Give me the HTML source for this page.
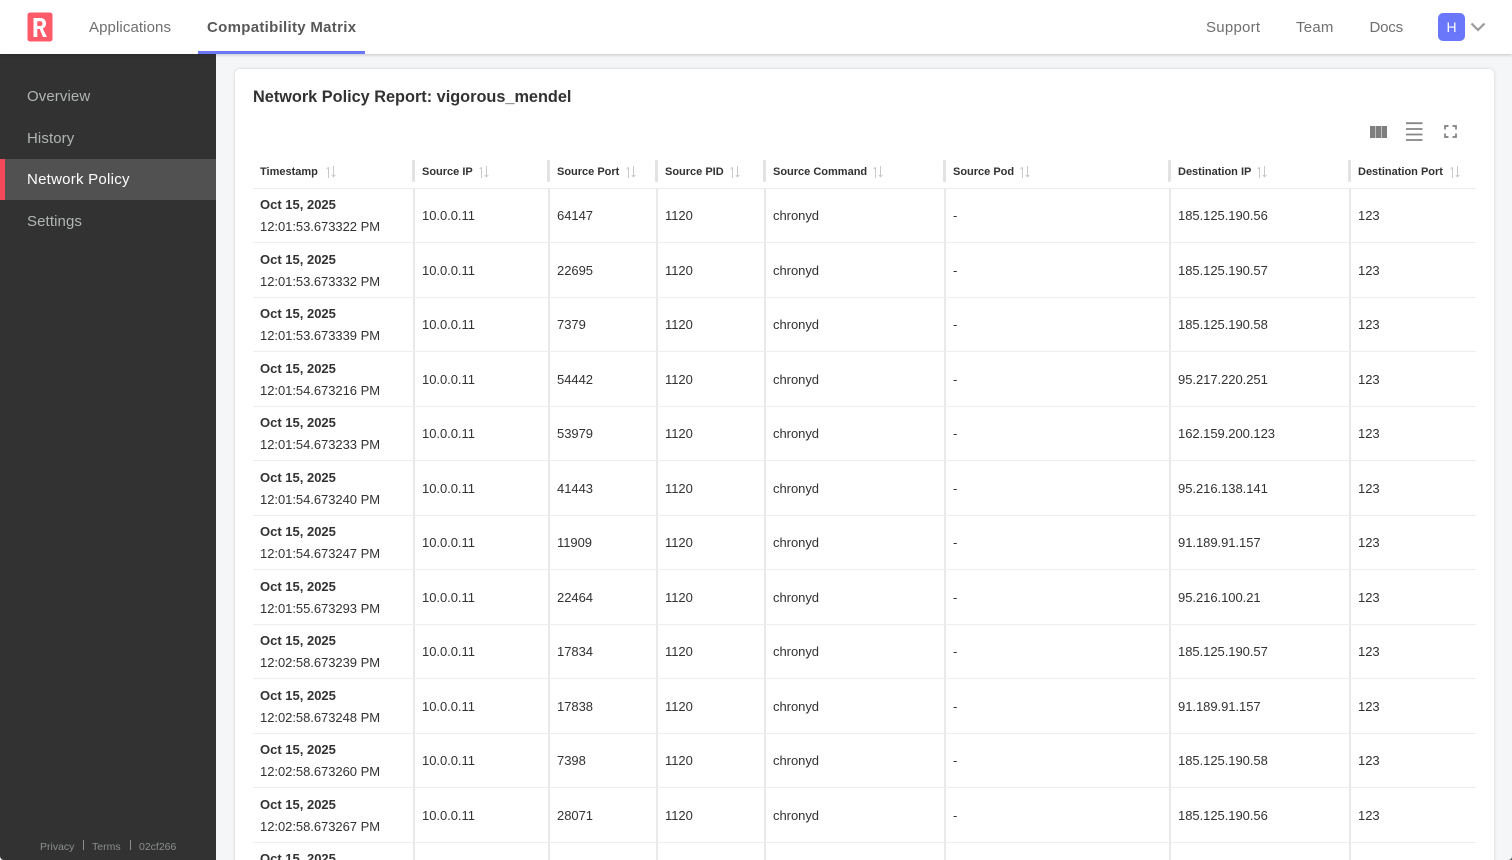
<!DOCTYPE html>
<html><head><meta charset="utf-8"><title>Network Policy</title>
<style>
*{box-sizing:border-box}
html,body{margin:0;padding:0;width:1512px;height:860px;overflow:hidden;background:#f5f6f8;font-family:"Liberation Sans",sans-serif;color:#323232}
#wrap{position:relative;width:1512px;height:860px;overflow:hidden;background:#f5f6f8}
.a{position:absolute;white-space:nowrap}
#top{position:absolute;left:0;top:0;width:1512px;height:54px;background:#fff;box-shadow:0 1px 3px rgba(0,0,0,.2);z-index:3}
.nav{font-size:15px;line-height:20px;color:#6f6f6f;top:18px;letter-spacing:.1px}
#side{position:absolute;left:0;top:54px;width:216px;height:806px;background:#323232;z-index:2;border-bottom-left-radius:4px}
.si{position:absolute;left:27px;font-size:15px;line-height:20px;color:#b0b5b5;white-space:nowrap;letter-spacing:.1px}
.ft{font-size:10.500px;line-height:14px;color:#8a8f8f;top:840px}
#card{position:absolute;left:235px;top:69px;width:1259px;height:800px;background:#fff;border-radius:5px;box-shadow:0 0 3px rgba(0,0,0,.16)}
#tbl{position:absolute;left:253px;top:160px;width:1223px}
.h,.r{display:flex;position:absolute;left:0;width:1223px}
.h{top:0;height:28.500px;border-bottom:1px solid #eeeeee;font-size:11px;font-weight:bold;line-height:24px;color:#323232}
.r{height:54.500px;border-bottom:1px solid #eeeeee;font-size:13px;color:#323232;letter-spacing:-.04px}
.c{position:relative;height:100%;white-space:nowrap}
.r .c{line-height:53px;border-left:2px solid #e9e9e9;padding-left:7px;padding-top:.6px}
.r .c:first-child{border-left:0;padding-left:7px;line-height:22px;padding-top:5.600px}
.h .c{padding-left:9px}
.h .c:first-child{padding-left:7px}
.h .c:not(:first-child)::before{content:"";position:absolute;left:-1px;top:0;width:3px;height:22px;background:#e3e3e3;border-radius:1px}
.c1{width:160px}.c2{width:135px}.c3{width:108px}.c4{width:108px}.c5{width:180px}.c6{width:225px}.c7{width:180px}.c8{width:127px}
b{font-weight:bold;font-size:13px;display:block;color:#323232;letter-spacing:0}
.s{display:inline-block;vertical-align:-3px;margin-left:5px}
.h .c1 .s{margin-left:7px}
.h .c3 .s,.h .c8 .s{margin-left:6px}
</style></head><body>
<div id="wrap">
<svg width="0" height="0" style="position:absolute"><defs><symbol id="sort" viewBox="0 0 12 12"><path d="M3.500 12V1.200M1.700 3 3.500 1.200M8.500 0V10.800M6.700 9 8.500 10.800 10.300 9" fill="none" stroke="#c9c9c9" stroke-width="1"/></symbol></defs></svg>

<div id="top">
<svg class="a" style="left:27px;top:12px" width="26" height="30" viewBox="0 0 26 30"><rect x="0.500" y="0.500" width="25" height="29" rx="2.500" fill="#fe5a6a"/><path d="M6.500 25V6h6.800c3.800 0 5.700 2.300 5.700 5.500 0 2.500-1.200 4.300-3.300 5L20 25h-4l-3.300-8H10.300v8zM10.300 14h2.800c1.600 0 2.400-1 2.400-2.500 0-1.400-.8-2.300-2.400-2.300h-2.800z" fill="#fff"/></svg>
<div class="a nav" style="left:89px">Applications</div>
<div class="a nav" style="left:207px;font-weight:bold;color:#585858;letter-spacing:.3px">Compatibility Matrix</div>
<div class="a" style="left:198px;top:51px;width:167px;height:3px;background:#6a77fb"></div>
<div class="a nav" style="left:1206px;letter-spacing:.25px">Support</div>
<div class="a nav" style="left:1296px;letter-spacing:.25px">Team</div>
<div class="a nav" style="left:1369.500px;letter-spacing:-.2px">Docs</div>
<div class="a" style="left:1438px;top:13px;width:27px;height:28px;border-radius:5px;background:#6a77fb;color:#fff;font-size:14px;line-height:28px;text-align:center">H</div>
<svg class="a" style="left:1470px;top:22px" width="16" height="10" viewBox="0 0 16 10"><path d="M1.500 1.500 8 8l6.500-6.500" fill="none" stroke="#9b9b9b" stroke-width="2.200"/></svg>
</div>

<div id="side">
<div class="si" style="top:33px">Overview</div>
<div class="si" style="top:75px">History</div>
<div style="position:absolute;left:0;top:104.500px;width:216px;height:41.500px;background:#515151;border-left:5px solid #f4495a"></div>
<div class="si" style="top:116px;color:#fff;letter-spacing:.25px">Network Policy</div>
<div class="si" style="top:158px">Settings</div>
</div>
<div class="a ft" style="left:40px;z-index:3">Privacy</div>
<div class="a" style="left:83px;top:840px;width:1px;height:10px;background:#8a8f8f;z-index:3"></div>
<div class="a ft" style="left:92px;z-index:3">Terms</div>
<div class="a" style="left:130px;top:840px;width:1px;height:10px;background:#8a8f8f;z-index:3"></div>
<div class="a ft" style="left:139px;z-index:3">02cf266</div>

<div id="card"></div>
<div class="a" style="left:253px;top:87px;font-size:16.300px;line-height:21px;font-weight:bold;color:#323232">Network Policy Report: vigorous_mendel</div>

<svg class="a" style="left:1370px;top:126px" width="17" height="12" viewBox="0 0 17 12"><path d="M0 0h5.300v12H0zM5.800 0h5.400v12H5.800zM11.700 0H17v12h-5.300z" fill="#7f7f7f"/></svg>
<svg class="a" style="left:1405px;top:122px" width="18" height="19" viewBox="0 0 18 19"><path d="M1 1.200h16.500M1 7h16.500M1 12.500h16.500M1 18h16.500" fill="none" stroke="#858585" stroke-width="1.800"/></svg>
<svg class="a" style="left:1444px;top:125px" width="13" height="13" viewBox="0 0 13 13"><path d="M1 4.500V1h3.500M8.500 1H12v3.500M12 8.500V12H8.500M4.500 12H1V8.500" fill="none" stroke="#7f7f7f" stroke-width="1.700"/></svg>

<div id="tbl">
<div class="h">
<div class="c c1">Timestamp<svg class="s" width="12" height="12"><use href="#sort"/></svg></div>
<div class="c c2">Source IP<svg class="s" width="12" height="12"><use href="#sort"/></svg></div>
<div class="c c3">Source Port<svg class="s" width="12" height="12"><use href="#sort"/></svg></div>
<div class="c c4">Source PID<svg class="s" width="12" height="12"><use href="#sort"/></svg></div>
<div class="c c5">Source Command<svg class="s" width="12" height="12"><use href="#sort"/></svg></div>
<div class="c c6">Source Pod<svg class="s" width="12" height="12"><use href="#sort"/></svg></div>
<div class="c c7">Destination IP<svg class="s" width="12" height="12"><use href="#sort"/></svg></div>
<div class="c c8">Destination Port<svg class="s" width="12" height="12"><use href="#sort"/></svg></div>
</div>
<div class="r" style="top:28.500px"><div class="c c1"><b>Oct 15, 2025</b>12:01:53.673322 PM</div><div class="c c2">10.0.0.11</div><div class="c c3">64147</div><div class="c c4">1120</div><div class="c c5">chronyd</div><div class="c c6">-</div><div class="c c7">185.125.190.56</div><div class="c c8">123</div></div>
<div class="r" style="top:83px"><div class="c c1"><b>Oct 15, 2025</b>12:01:53.673332 PM</div><div class="c c2">10.0.0.11</div><div class="c c3">22695</div><div class="c c4">1120</div><div class="c c5">chronyd</div><div class="c c6">-</div><div class="c c7">185.125.190.57</div><div class="c c8">123</div></div>
<div class="r" style="top:137.500px"><div class="c c1"><b>Oct 15, 2025</b>12:01:53.673339 PM</div><div class="c c2">10.0.0.11</div><div class="c c3">7379</div><div class="c c4">1120</div><div class="c c5">chronyd</div><div class="c c6">-</div><div class="c c7">185.125.190.58</div><div class="c c8">123</div></div>
<div class="r" style="top:192px"><div class="c c1"><b>Oct 15, 2025</b>12:01:54.673216 PM</div><div class="c c2">10.0.0.11</div><div class="c c3">54442</div><div class="c c4">1120</div><div class="c c5">chronyd</div><div class="c c6">-</div><div class="c c7">95.217.220.251</div><div class="c c8">123</div></div>
<div class="r" style="top:246.500px"><div class="c c1"><b>Oct 15, 2025</b>12:01:54.673233 PM</div><div class="c c2">10.0.0.11</div><div class="c c3">53979</div><div class="c c4">1120</div><div class="c c5">chronyd</div><div class="c c6">-</div><div class="c c7">162.159.200.123</div><div class="c c8">123</div></div>
<div class="r" style="top:301px"><div class="c c1"><b>Oct 15, 2025</b>12:01:54.673240 PM</div><div class="c c2">10.0.0.11</div><div class="c c3">41443</div><div class="c c4">1120</div><div class="c c5">chronyd</div><div class="c c6">-</div><div class="c c7">95.216.138.141</div><div class="c c8">123</div></div>
<div class="r" style="top:355.500px"><div class="c c1"><b>Oct 15, 2025</b>12:01:54.673247 PM</div><div class="c c2">10.0.0.11</div><div class="c c3">11909</div><div class="c c4">1120</div><div class="c c5">chronyd</div><div class="c c6">-</div><div class="c c7">91.189.91.157</div><div class="c c8">123</div></div>
<div class="r" style="top:410px"><div class="c c1"><b>Oct 15, 2025</b>12:01:55.673293 PM</div><div class="c c2">10.0.0.11</div><div class="c c3">22464</div><div class="c c4">1120</div><div class="c c5">chronyd</div><div class="c c6">-</div><div class="c c7">95.216.100.21</div><div class="c c8">123</div></div>
<div class="r" style="top:464.500px"><div class="c c1"><b>Oct 15, 2025</b>12:02:58.673239 PM</div><div class="c c2">10.0.0.11</div><div class="c c3">17834</div><div class="c c4">1120</div><div class="c c5">chronyd</div><div class="c c6">-</div><div class="c c7">185.125.190.57</div><div class="c c8">123</div></div>
<div class="r" style="top:519px"><div class="c c1"><b>Oct 15, 2025</b>12:02:58.673248 PM</div><div class="c c2">10.0.0.11</div><div class="c c3">17838</div><div class="c c4">1120</div><div class="c c5">chronyd</div><div class="c c6">-</div><div class="c c7">91.189.91.157</div><div class="c c8">123</div></div>
<div class="r" style="top:573.500px"><div class="c c1"><b>Oct 15, 2025</b>12:02:58.673260 PM</div><div class="c c2">10.0.0.11</div><div class="c c3">7398</div><div class="c c4">1120</div><div class="c c5">chronyd</div><div class="c c6">-</div><div class="c c7">185.125.190.58</div><div class="c c8">123</div></div>
<div class="r" style="top:628px"><div class="c c1"><b>Oct 15, 2025</b>12:02:58.673267 PM</div><div class="c c2">10.0.0.11</div><div class="c c3">28071</div><div class="c c4">1120</div><div class="c c5">chronyd</div><div class="c c6">-</div><div class="c c7">185.125.190.56</div><div class="c c8">123</div></div>
<div class="r" style="top:682.500px"><div class="c c1"><b>Oct 15, 2025</b></div><div class="c c2"></div><div class="c c3"></div><div class="c c4"></div><div class="c c5"></div><div class="c c6"></div><div class="c c7"></div><div class="c c8"></div></div>
</div>
<svg class="a" style="right:0;bottom:0;z-index:4" width="4" height="4" viewBox="0 0 4 4"><path d="M4 0V4H0C2.500 4 4 2.500 4 0z" fill="#555"/></svg>
</div>
</body></html>
